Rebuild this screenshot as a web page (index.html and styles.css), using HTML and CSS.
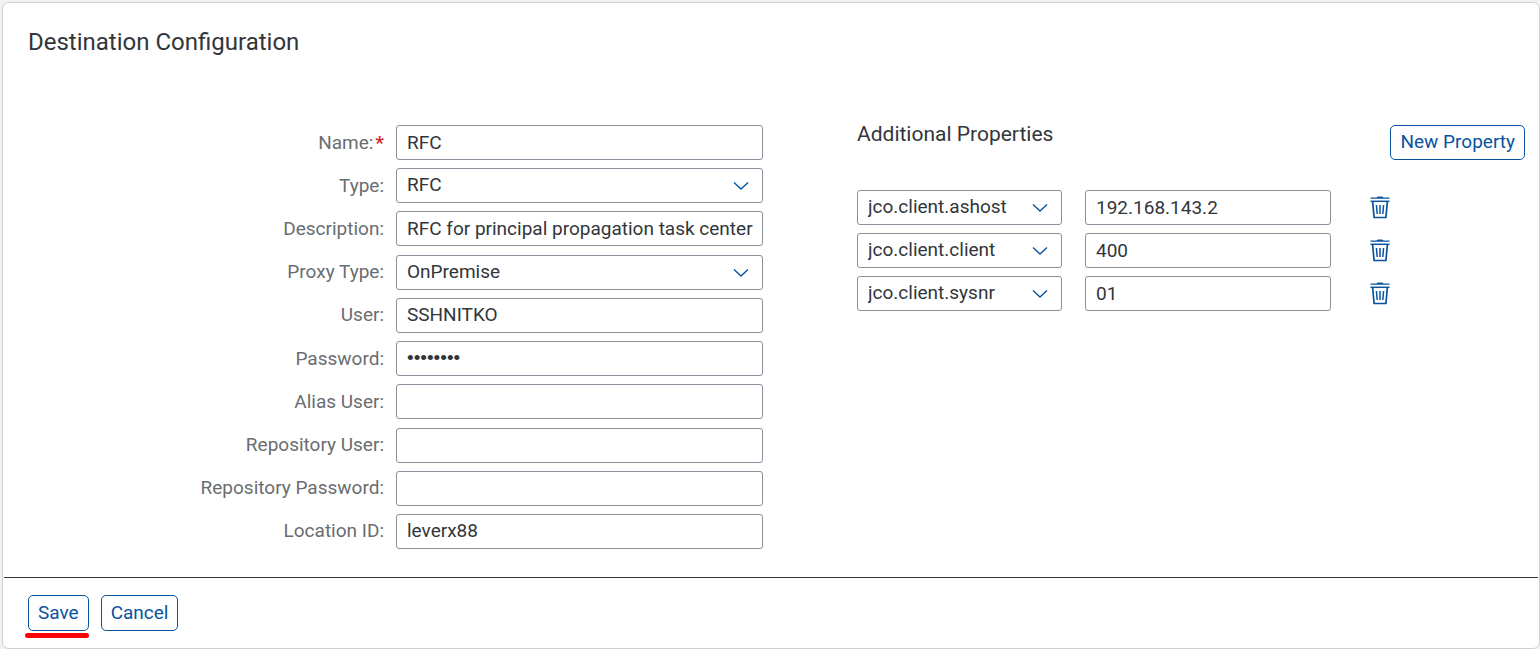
FILE: index.html
```html
<!DOCTYPE html>
<html lang="en">
<head>
<meta charset="utf-8">
<meta name="viewport" content="width=device-width, initial-scale=1">
<title>Destination Configuration</title>
<link rel="stylesheet" href="styles.css">
</head>
<body>
<svg class="sprite" aria-hidden="true">
  <symbol id="chevron" viewBox="0 0 16 10"><path d="M1 1.500 8 8 15 1.500" fill="none" stroke="currentColor" stroke-width="1.400"/></symbol>
  <symbol id="trash" viewBox="0 0 20 23">
    <path d="M6.500 1.500Q7 .4 8.500 .4h3q1.500 0 2 1.100H19.500v1.300H.5V1.500z" fill="currentColor"/>
    <path d="M.5 5.300h19" fill="none" stroke="currentColor" stroke-width="1.500"/>
    <path d="M2.600 5.300 4.100 21.500H15.900L17.400 5.300" fill="none" stroke="currentColor" stroke-width="1.700"/>
    <path d="M6.400 9l.8 9M10 9V18M13.600 9l-.8 9" fill="none" stroke="currentColor" stroke-width="1.500"/>
  </symbol>
</svg>
<main class="card">
  <h1 class="title">Destination Configuration</h1>
  <form class="form" id="destination">
    <div class="fields">
      <div class="field"><label class="label" for="name">Name:<span class="required">*</span></label><input class="control" id="name" type="text" value="RFC" required></div>
      <div class="field"><label class="label" for="type">Type:</label><div class="picker"><select class="control" id="type"><option>RFC</option></select><svg class="chevron"><use href="#chevron"/></svg></div></div>
      <div class="field"><label class="label" for="description">Description:</label><input class="control" id="description" type="text" value="RFC for principal propagation task center"></div>
      <div class="field"><label class="label" for="proxy">Proxy Type:</label><div class="picker"><select class="control" id="proxy"><option>OnPremise</option></select><svg class="chevron"><use href="#chevron"/></svg></div></div>
      <div class="field"><label class="label" for="user">User:</label><input class="control" id="user" type="text" value="SSHNITKO"></div>
      <div class="field"><label class="label" for="password">Password:</label><input class="control secret" id="password" type="password" value="password"></div>
      <div class="field"><label class="label" for="alias">Alias User:</label><input class="control" id="alias" type="text"></div>
      <div class="field"><label class="label" for="repo-user">Repository User:</label><input class="control" id="repo-user" type="text"></div>
      <div class="field"><label class="label" for="repo-password">Repository Password:</label><input class="control secret" id="repo-password" type="password"></div>
      <div class="field"><label class="label" for="location">Location ID:</label><input class="control" id="location" type="text" value="leverx88"></div>
    </div>
    <section class="properties">
      <div class="properties-head">
        <h2 class="subtitle">Additional Properties</h2>
        <button class="button" type="button">New Property</button>
      </div>
      <div class="property-list">
        <div class="property"><div class="picker"><select class="control" aria-label="Property 1"><option>jco.client.ashost</option></select><svg class="chevron"><use href="#chevron"/></svg></div><input class="control" type="text" value="192.168.143.2" aria-label="Value 1"><button class="delete" type="button" aria-label="Delete property 1"><svg class="trash"><use href="#trash"/></svg></button></div>
        <div class="property"><div class="picker"><select class="control" aria-label="Property 2"><option>jco.client.client</option></select><svg class="chevron"><use href="#chevron"/></svg></div><input class="control" type="text" value="400" aria-label="Value 2"><button class="delete" type="button" aria-label="Delete property 2"><svg class="trash"><use href="#trash"/></svg></button></div>
        <div class="property"><div class="picker"><select class="control" aria-label="Property 3"><option>jco.client.sysnr</option></select><svg class="chevron"><use href="#chevron"/></svg></div><input class="control" type="text" value="01" aria-label="Value 3"><button class="delete" type="button" aria-label="Delete property 3"><svg class="trash"><use href="#trash"/></svg></button></div>
      </div>
    </section>
  </form>
  <footer class="actions">
    <div class="marked"><button class="button" type="submit" form="destination">Save</button></div>
    <button class="button" type="button">Cancel</button>
  </footer>
</main>
</body>
</html>
```

FILE: styles.css
```css
* { box-sizing: border-box; }

body {
  margin: 0;
  padding: 2px 0 0 2px;
  background: #f2f2f2;
  color: #32363a;
  font: 19px/24px Roboto, "Liberation Sans", sans-serif;
}

.sprite { display: none; }

.card {
  border: 1px solid #d0d0d0;
  border-radius: 7px;
  background: #fff;
}

.title {
  margin: 0;
  padding: 24px 25px 0;
  font-size: 24px;
  line-height: 30px;
  font-weight: 400;
}

.form {
  display: grid;
  grid-template-columns: 760fr 668fr;
  column-gap: 94px;
  padding: 68px 14px 28px 0;
}

.fields {
  display: flex;
  flex-direction: column;
  justify-content: space-between;
  gap: 8px;
  min-height: 424px;
}

.field {
  display: grid;
  grid-template-columns: 381fr 367fr;
  column-gap: 12px;
  align-items: center;
}

.label {
  color: #6a6d70;
  text-align: right;
}

.required {
  margin-left: 2px;
  color: #d42a33;
  font-weight: 700;
}

.control {
  display: block;
  width: 100%;
  min-width: 0;
  height: 35px;
  margin: 0;
  padding: 0 6px 1px 10px;
  border: 1px solid #89919a;
  border-radius: 3px;
  background: #fff;
  color: #32363a;
  font: inherit;
  appearance: none;
}

.secret { font-family: "Liberation Sans", sans-serif; }

.picker { position: relative; }

.chevron {
  position: absolute;
  right: 14px;
  top: 13px;
  width: 16px;
  height: 10px;
  color: #0854a0;
  pointer-events: none;
}

.properties-head {
  display: flex;
  justify-content: space-between;
  align-items: flex-start;
}

.subtitle {
  margin: 0;
  font-size: 21px;
  line-height: 18px;
  font-weight: 400;
}

.property-list {
  display: grid;
  gap: 8px;
  padding-top: 30px;
}

.property {
  display: grid;
  grid-template-columns: 205fr 246fr 171fr;
  column-gap: 23px;
}

.delete {
  justify-self: start;
  display: grid;
  place-items: center;
  height: 35px;
  margin-left: 16px;
  padding: 0;
  border: 0;
  background: none;
  color: #0854a0;
}

.trash {
  width: 20px;
  height: 23px;
}

.button {
  height: 35px;
  padding: 0 9px 1px;
  border: 1px solid #0854a0;
  border-radius: 5px;
  background: #fff;
  color: #0854a0;
  font: inherit;
}

.actions {
  display: flex;
  gap: 12px;
  margin: 0 1px;
  padding: 17px 24px 17px;
  border-top: 1px solid #32363a;
}

.actions .button { height: 36px; }

.marked { position: relative; }

.marked::after {
  content: "";
  position: absolute;
  left: -3px;
  right: 0;
  bottom: -7px;
  height: 5px;
  border-radius: 3px;
  background: #f00;
}
```
